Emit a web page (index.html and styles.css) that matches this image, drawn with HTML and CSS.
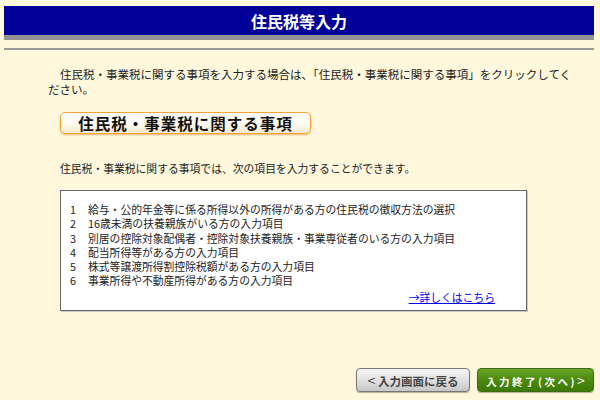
FILE: index.html
```html
<!DOCTYPE html>
<html lang="ja">
<head>
<meta charset="utf-8">
<title>住民税等入力</title>
<link rel="stylesheet" href="styles.css">
</head>
<body>
<div class="page">
  <header class="titlebar"><h1 class="title">住民税等入力</h1></header>
  <div class="rule"></div>
  <main class="content">
    <p class="lead">住民税・事業税に関する事項を入力する場合は、「住民税・事業税に関する事項」をクリックしてください。</p>
    <div class="topic-row"><a class="topic-btn" href="#">住民税・事業税に関する事項</a></div>
    <p class="desc">住民税・事業税に関する事項では、次の項目を入力することができます。</p>
    <div class="infobox">
      <ol class="items">
        <li><span class="num">1</span><span>給与・公的年金等に係る所得以外の所得がある方の住民税の徴収方法の選択</span></li>
        <li><span class="num">2</span><span>16歳未満の扶養親族がいる方の入力項目</span></li>
        <li><span class="num">3</span><span>別居の控除対象配偶者・控除対象扶養親族・事業専従者のいる方の入力項目</span></li>
        <li><span class="num">4</span><span>配当所得等がある方の入力項目</span></li>
        <li><span class="num">5</span><span>株式等譲渡所得割控除税額がある方の入力項目</span></li>
        <li><span class="num">6</span><span>事業所得や不動産所得がある方の入力項目</span></li>
      </ol>
      <div class="more-row"><a class="more" href="#">→詳しくはこちら</a></div>
    </div>
  </main>
  <footer class="actions">
    <a class="btn btn-back" href="#"><span class="chev">&lt;</span> 入力画面に戻る</a>
    <a class="btn btn-next" href="#">入力終了(次へ)<span class="chev">&gt;</span></a>
  </footer>
</div>
</body>
</html>
```

FILE: styles.css
```css
html, body {
  margin: 0;
  padding: 0;
  background: #fff8dc;
}
body {
  font-family: "Noto Sans CJK JP", "Noto Sans", sans-serif;
  color: #222;
  font-size: 11.5px;
}
.page {
  width: 600px;
  height: 400px;
  padding: 6px 6px 0 4px;
  box-sizing: border-box;
  display: flex;
  flex-direction: column;
}
.titlebar {
  background: #000099;
  height: 29px;
  border-bottom: 5px solid #939393;
  display: flex;
  align-items: center;
  justify-content: center;
}
.title {
  margin: 0;
  color: #fff;
  font-size: 16px;
  font-weight: bold;
  line-height: 1;
  padding-top: 1px;
}
.rule {
  margin-top: 8px;
  height: 2px;
  background: #999;
}
.content {
  padding: 17px 14px 0 44px;
}
.lead {
  margin: 0;
  line-height: 15px;
  text-indent: 12px;
}
.topic-row {
  margin: 15px 0 0 12px;
  display: flex;
}
.topic-btn {
  display: block;
  width: 249px;
  height: 20px;
  box-sizing: content-box;
  border: 1.5px solid #f2a43a;
  border-radius: 5px;
  background: linear-gradient(#ffffff 0%, #fffbf2 55%, #f6e8c8 100%);
  box-shadow: 0 1px 2px rgba(210, 130, 30, 0.55);
  color: #111;
  text-decoration: none;
  font-size: 15.5px;
  font-weight: bold;
  letter-spacing: 1px;
  line-height: 20px;
  text-align: center;
}
.desc {
  margin: 27px 0 0 12px;
  line-height: 15px;
  font-size: 10.8px;
}
.infobox {
  margin: 14px 0 0 12px;
  width: 467px;
  height: 121px;
  background: #fff;
  border: 1px solid #666;
  box-shadow: 1px 1px 0 #ccc;
  padding: 11px 0 0 9px;
  box-sizing: border-box;
  font-size: 10.8px;
}
.items {
  list-style: none;
  margin: 0;
  padding: 0;
  line-height: 14.3px;
}
.items li {
  display: flex;
}
.num {
  width: 18px;
  flex: none;
}
.more-row {
  display: flex;
  justify-content: flex-end;
  padding-right: 31px;
  margin-top: 2px;
  line-height: 14px;
}
.more {
  color: #0000ee;
  text-decoration: underline;
}
.actions {
  margin-top: auto;
  margin-bottom: 8px;
  display: flex;
  justify-content: flex-end;
  gap: 7px;
}
.btn {
  display: block;
  height: 22px;
  line-height: 22px;
  border-radius: 4px;
  text-decoration: none;
  font-weight: bold;
  font-size: 11.5px;
  text-align: center;
  box-sizing: content-box;
}
.chev {
  font-size: 14px;
  font-weight: normal;
}
.btn-back {
  width: 112px;
  border: 1px solid #777;
  background: linear-gradient(#f6f6f6 0%, #dedede 55%, #c6c6c6 100%);
  color: #444;
  box-shadow: 0 1px 1px rgba(0, 0, 0, 0.3);
}
.btn-next {
  width: 115px;
  border: 1px solid #3d6b10;
  background: linear-gradient(#6aa424 0%, #4a8a10 50%, #3c7a08 100%);
  color: #fff;
  box-shadow: 0 1px 1px rgba(0, 0, 0, 0.3);
  letter-spacing: 2.5px;
  font-size: 10.5px;
}
.btn-next .chev {
  letter-spacing: 0;
}
```
